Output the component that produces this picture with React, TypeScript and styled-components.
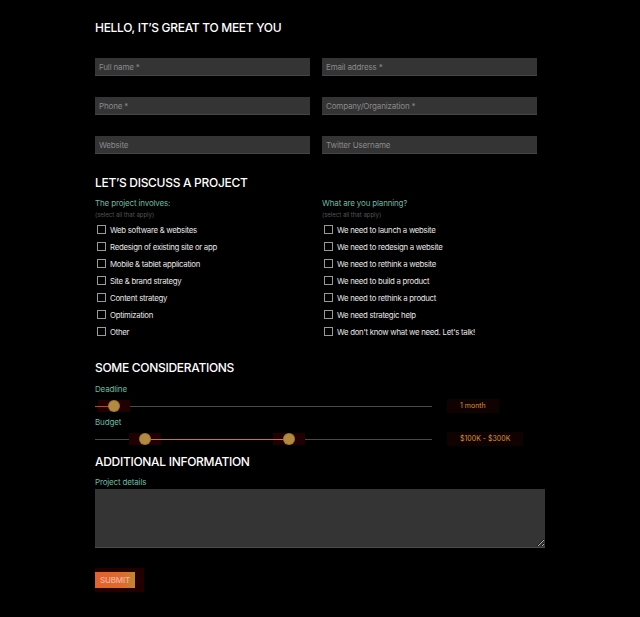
import React from "react";
import styled, { createGlobalStyle } from "styled-components";

const GlobalStyle = createGlobalStyle`
  html, body {
    margin: 0;
    padding: 0;
    background: #000;
  }
  body {
    font-family: Inter, "Liberation Sans", sans-serif;
    color: #e8e8e8;
  }
`;

const involves = [
  "Web software & websites",
  "Redesign of existing site or app",
  "Mobile & tablet application",
  "Site & brand strategy",
  "Content strategy",
  "Optimization",
  "Other",
];

const planning = [
  "We need to launch a website",
  "We need to redesign a website",
  "We need to rethink a website",
  "We need to build a product",
  "We need to rethink a product",
  "We need strategic help",
  "We don't know what we need. Let's talk!",
];

const fields = [
  ["Full name", true],
  ["Email address", true],
  ["Phone", true],
  ["Company/Organization", true],
  ["Website", false],
  ["Twitter Username", false],
] as const;

const App = () => {
  return (
    <Page>
      <GlobalStyle />
      <Form>
        <Heading>HELLO, IT’S GREAT TO MEET YOU</Heading>
        <FieldGrid>
          {fields.map(([name, req]) => (
            <Input key={name} placeholder={req ? `${name} *` : name} />
          ))}
        </FieldGrid>

        <Heading $top={21}>LET’S DISCUSS A PROJECT</Heading>
        <Columns>
          <Column>
            <Label $top={7}>The project involves:</Label>
            <Hint>(select all that apply)</Hint>
            <CheckList>
              {involves.map((t) => (
                <CheckRow key={t}>
                  <Box type="checkbox" />
                  {t}
                </CheckRow>
              ))}
            </CheckList>
          </Column>
          <Column>
            <Label $top={7}>What are you planning?</Label>
            <Hint>(select all that apply)</Hint>
            <CheckList>
              {planning.map((t) => (
                <CheckRow key={t}>
                  <Box type="checkbox" />
                  {t}
                </CheckRow>
              ))}
            </CheckList>
          </Column>
        </Columns>

        <Heading $top={20}>SOME CONSIDERATIONS</Heading>
        <Label $top={8}>Deadline</Label>
        <SliderRow>
          <Track>
            <Fill style={{ left: 0, width: "5.6%" }} $tone="#c0462e" />
            <Thumb style={{ left: "5.6%" }} />
          </Track>
          <Value>1 month</Value>
        </SliderRow>
        <Label $top={4}>Budget</Label>
        <SliderRow>
          <Track>
            <Fill style={{ left: "14.8%", width: "42.8%" }} $tone="#c77a2c" />
            <Thumb style={{ left: "14.8%" }} />
            <Thumb style={{ left: "57.6%" }} />
          </Track>
          <Value>$100K - $300K</Value>
        </SliderRow>

        <Heading $top={8}>ADDITIONAL INFORMATION</Heading>
        <Label $top={7}>Project details</Label>
        <Details />
        <SubmitWrap>
          <Submit>SUBMIT</Submit>
        </SubmitWrap>
      </Form>
    </Page>
  );
};

export default App;

const Page = styled.div`
  width: 640px;
  min-height: 617px;
  background: #000;
`;

const Form = styled.div`
  display: flex;
  flex-direction: column;
  align-items: flex-start;
  padding: 20px 0 0 95px;
  width: 450px;
`;

const Heading = styled.h2<{ $top?: number }>`
  margin: ${(p) => p.$top ?? 0}px 0 0;
  font-size: 12px;
  line-height: 16px;
  font-weight: 500;
  letter-spacing: -0.025em;
  color: #fff;
`;

const FieldGrid = styled.div`
  display: grid;
  grid-template-columns: 215px 215px;
  column-gap: 12px;
  row-gap: 21px;
  margin-top: 22px;
`;

const Input = styled.input`
  box-sizing: border-box;
  height: 18px;
  width: 100%;
  border: none;
  border-bottom: 1px solid #454545;
  background: #343434;
  padding: 0 4px;
  font-family: inherit;
  font-size: 8px;
  letter-spacing: -0.02em;
  color: #ddd;
  outline: none;
  &::placeholder {
    color: #8a8a8a;
  }
`;

const Columns = styled.div`
  display: grid;
  grid-template-columns: 227px 227px;
`;

const Column = styled.div`
  display: flex;
  flex-direction: column;
`;

const Label = styled.div<{ $top?: number }>`
  margin-top: ${(p) => p.$top ?? 0}px;
  font-size: 8px;
  line-height: 10px;
  letter-spacing: -0.02em;
  color: #6dbba3;
`;

const Hint = styled.div`
  margin-top: 3px;
  font-size: 6px;
  line-height: 8px;
  color: #555;
`;

const CheckList = styled.div`
  display: flex;
  flex-direction: column;
  margin-top: 2px;
`;

const CheckRow = styled.label`
  display: flex;
  align-items: center;
  height: 17px;
  padding-left: 2px;
  font-size: 7.8px;
  letter-spacing: -0.035em;
  color: #e6e6e6;
  white-space: nowrap;
`;

const Box = styled.input`
  appearance: none;
  box-sizing: border-box;
  width: 9px;
  height: 9px;
  margin: 0 4px 0 0;
  border: 1px solid #9a9a9a;
  background: transparent;
`;

const SliderRow = styled.div`
  display: flex;
  align-items: center;
  gap: 15px;
  height: 14px;
  margin-top: 5px;
`;

const Track = styled.div`
  position: relative;
  isolation: isolate;
  width: 337px;
  height: 1px;
  background: #4a4a4a;
`;

const Fill = styled.div<{ $tone: string }>`
  position: absolute;
  top: 0;
  height: 1px;
  background: ${(p) => p.$tone};
`;

const Thumb = styled.div`
  position: absolute;
  top: 0;
  width: 10px;
  height: 10px;
  margin: -5px 0 0 -5px;
  border-radius: 50%;
  background: #b38b3f;
  box-shadow: 0 0 0 1px #a07a35;
  &::before {
    content: "";
    position: absolute;
    left: -11px;
    top: -1px;
    width: 32px;
    height: 12px;
    background: #200000;
    z-index: -1;
  }
`;

const Value = styled.div`
  padding: 2px 13px;
  background: #110202;
  font-size: 7px;
  line-height: 10px;
  color: #d4953a;
`;

const Details = styled.textarea`
  box-sizing: border-box;
  margin-top: 2px;
  width: 450px;
  height: 59px;
  border: none;
  border-bottom: 1px solid #4a4a4a;
  background: #343434;
  resize: vertical;
  outline: none;
`;

const SubmitWrap = styled.div`
  margin-top: 20px;
  padding: 4px 9px 4px 0;
  background: #220000;
`;

const Submit = styled.button`
  display: block;
  width: 40px;
  height: 16px;
  padding: 0;
  border: none;
  background: linear-gradient(90deg, #e4622a 0%, #dd6b2b 70%, #b88a33 100%);
  font-family: inherit;
  font-size: 8px;
  font-weight: 500;
  color: #f6b3a4;
  letter-spacing: -0.02em;
`;
